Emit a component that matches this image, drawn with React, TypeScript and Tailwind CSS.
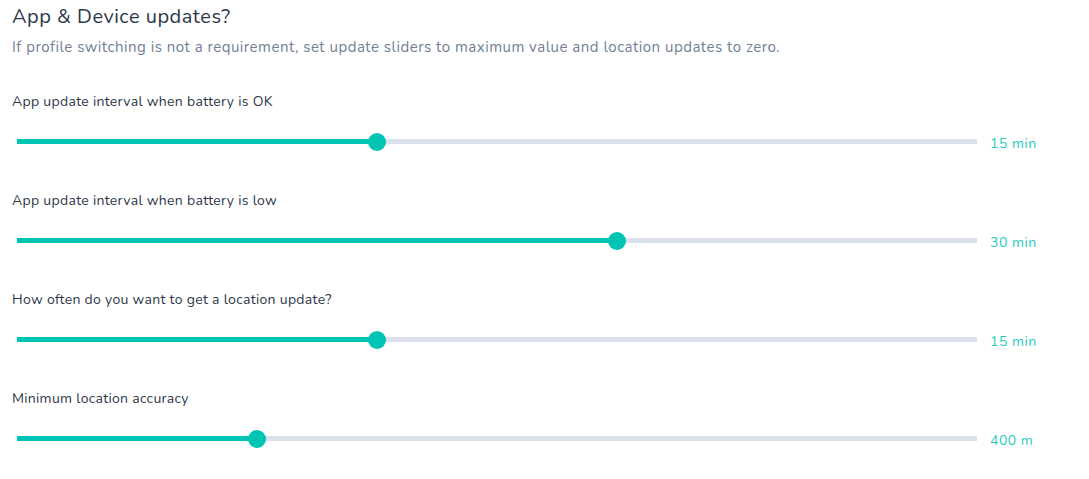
const sliders = [
  { label: 'App update interval when battery is OK', value: 0.375, text: '15 min' },
  { label: 'App update interval when battery is low', value: 0.625, text: '30 min' },
  { label: 'How often do you want to get a location update?', value: 0.375, text: '15 min' },
  { label: 'Minimum location accuracy', value: 0.25, text: '400 m' },
];

function Slider({ value }: { value: number }) {
  return (
    <div className="relative w-[960px] h-[19px] flex items-center">
      <div className="w-full h-[5px] bg-[#dce0eb]" />
      <div className="absolute left-0 h-[5px] bg-[#00c4b4]" style={{ width: `${value * 100}%` }} />
      <div
        className="absolute w-[18px] h-[18px] -ml-[9px] rounded-full bg-[#00c4b4]"
        style={{ left: `${value * 100}%` }}
      />
    </div>
  );
}

export default function App() {
  return (
    <div className="min-h-screen bg-white pl-3 pt-[5px] font-['Nunito','Lato','Noto_Sans',sans-serif]">
      <h2 className="text-[20px] leading-6 tracking-[0.5px] text-[#2d3748]">App &amp; Device updates?</h2>
      <p className="mt-2 text-[15px] leading-5 tracking-[0.5px] text-[#718096]">
        If profile switching is not a requirement, set update sliders to maximum value and location updates to zero.
      </p>
      <div className="mt-[35px] flex flex-col gap-10">
        {sliders.map((s, i) => (
          <div key={i}>
            <div className="text-[14px] leading-5 tracking-[0.3px] text-[#2d3748]">{s.label}</div>
            <div className="mt-5 flex h-[19px] items-center pl-[5px]">
              <Slider value={s.value} />
              <span className="relative top-[2px] ml-[13px] text-[14px] leading-[19px] tracking-[0.5px] text-[#1fcdbd]">
                {s.text}
              </span>
            </div>
          </div>
        ))}
      </div>
    </div>
  );
}
